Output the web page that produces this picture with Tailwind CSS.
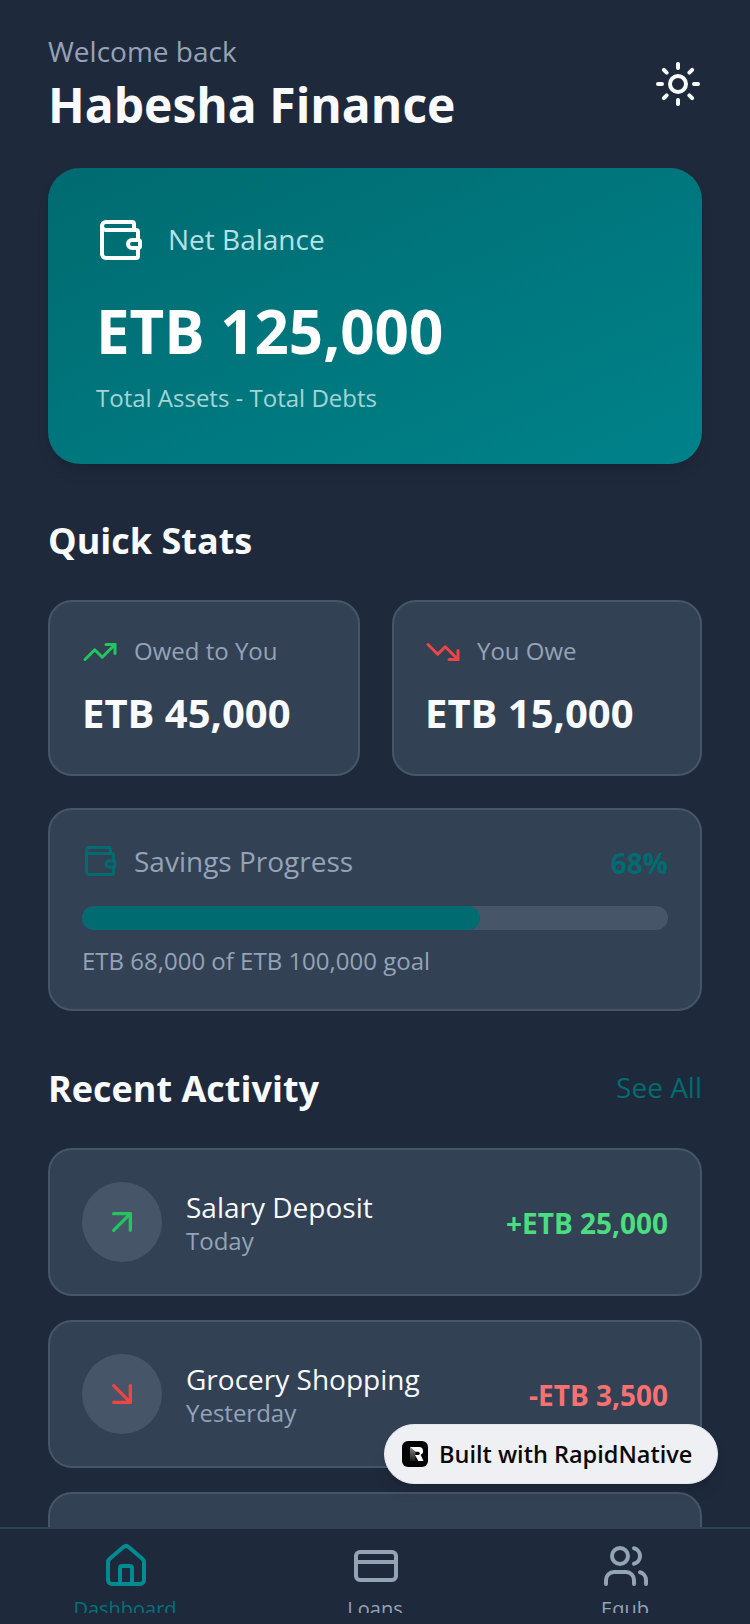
<!DOCTYPE html>
<html lang="en">
<head>
    <meta charset="UTF-8">
    <meta name="viewport" content="width=device-width, initial-scale=1.0">
    <title>Habesha Finance</title>
    <script src="https://cdn.jsdelivr.net/npm/@tailwindcss/browser@4"></script>
</head>
<body class="bg-[#1e293b] font-['Open_Sans',sans-serif]">
<div class="relative h-[1624px] w-[750px] overflow-hidden flex flex-col">
    <!-- Scrolling content -->
    <main class="flex-1 min-h-0 overflow-hidden px-12 pt-8">
        <!-- Header -->
        <header class="flex items-center justify-between mb-[30px]">
            <div>
                <p class="text-[28px] leading-[38px] text-[#94a3b8]">Welcome back</p>
                <h1 class="mt-[2px] text-[48px] leading-[66px] font-bold text-[#f8fafc]">Habesha Finance</h1>
            </div>
            <svg class="w-12 h-12 -mt-[2px] text-[#f8fafc]" viewBox="0 0 24 24" fill="none" stroke="currentColor" stroke-width="2" stroke-linecap="round" stroke-linejoin="round">
                <circle cx="12" cy="12" r="4"/><path d="M12 2v2"/><path d="M12 20v2"/><path d="m4.93 4.93 1.41 1.41"/><path d="m17.66 17.66 1.41 1.41"/><path d="M2 12h2"/><path d="M20 12h2"/><path d="m6.34 17.66-1.41 1.41"/><path d="m19.07 4.93-1.41 1.41"/>
            </svg>
        </header>

        <!-- Net balance -->
        <section class="h-[296px] rounded-[32px] p-12 bg-gradient-to-br from-[#006b70] to-[#00828a] shadow-lg">
            <div class="flex items-center gap-6 h-12">
                <svg class="w-12 h-12 text-white" viewBox="0 0 24 24" fill="none" stroke="currentColor" stroke-width="2" stroke-linecap="round" stroke-linejoin="round">
                    <path d="M19 7V4a1 1 0 0 0-1-1H5a2 2 0 0 0 0 4h15a1 1 0 0 1 1 1v4h-3a2 2 0 0 0 0 4h3a1 1 0 0 0 1-1v-2a1 1 0 0 0-1-1"/><path d="M3 5v14a2 2 0 0 0 2 2h15a1 1 0 0 0 1-1v-4"/>
                </svg>
                <span class="pb-[2px] text-[28px] leading-9 text-[#b5e2e4]">Net Balance</span>
            </div>
            <p class="mt-[31px] text-[60px] leading-[72px] font-bold text-white">ETB 125,000</p>
            <p class="mt-[15px] text-[24px] leading-8 text-[#a3d5d7]">Total Assets - Total Debts</p>
        </section>

        <!-- Quick stats -->
        <h2 class="mt-[49px] mb-[31px] text-[36px] leading-[56px] font-bold text-[#f8fafc]">Quick Stats</h2>
        <div class="grid grid-cols-[312px_310px] gap-8">
            <div class="h-[176px] rounded-[24px] border-2 border-[#475569] bg-[#334155] p-8">
                <div class="flex items-center gap-4 h-9">
                    <svg class="w-9 h-9 shrink-0 text-[#22c55e]" viewBox="0 0 24 24" fill="none" stroke="currentColor" stroke-width="2" stroke-linecap="round" stroke-linejoin="round"><polyline points="22 7 13.5 15.5 8.5 10.5 2 17"/><polyline points="16 7 22 7 22 13"/></svg>
                    <span class="pb-[3px] text-[24px] leading-8 text-[#94a3b8]">Owed to You</span>
                </div>
                <p class="mt-[15px] text-[40px] leading-[56px] font-bold text-[#f8fafc]">ETB 45,000</p>
            </div>
            <div class="h-[176px] rounded-[24px] border-2 border-[#475569] bg-[#334155] py-8 pl-[31px] pr-8">
                <div class="flex items-center gap-4 h-9">
                    <svg class="w-9 h-9 shrink-0 text-[#ef4444]" viewBox="0 0 24 24" fill="none" stroke="currentColor" stroke-width="2" stroke-linecap="round" stroke-linejoin="round"><polyline points="22 17 13.5 8.5 8.5 13.5 2 7"/><polyline points="16 17 22 17 22 11"/></svg>
                    <span class="pb-[3px] text-[24px] leading-8 text-[#94a3b8]">You Owe</span>
                </div>
                <p class="mt-[15px] text-[40px] leading-[56px] font-bold text-[#f8fafc]">ETB 15,000</p>
            </div>
        </div>

        <!-- Savings -->
        <div class="mt-8 rounded-[24px] border-2 border-[#475569] bg-[#334155] p-8">
            <div class="flex items-center justify-between h-10 -mt-px">
                <div class="flex items-center gap-4">
                    <svg class="w-9 h-9 text-[#006b70]" viewBox="0 0 24 24" fill="none" stroke="currentColor" stroke-width="2" stroke-linecap="round" stroke-linejoin="round">
                        <path d="M19 7V4a1 1 0 0 0-1-1H5a2 2 0 0 0 0 4h15a1 1 0 0 1 1 1v4h-3a2 2 0 0 0 0 4h3a1 1 0 0 0 1-1v-2a1 1 0 0 0-1-1"/><path d="M3 5v14a2 2 0 0 0 2 2h15a1 1 0 0 0 1-1v-4"/>
                    </svg>
                    <span class="text-[28px] leading-9 text-[#94a3b8]">Savings Progress</span>
                </div>
                <span class="pt-[4px] text-[28px] leading-9 font-bold text-[#006b70]">68%</span>
            </div>
            <div class="mt-[25px] h-6 rounded-full bg-[#475569] overflow-hidden">
                <div class="h-full rounded-full bg-[#006b70]" style="width: 68%"></div>
            </div>
            <p class="mt-[15px] text-[24px] leading-8 text-[#94a3b8]">ETB 68,000 of ETB 100,000 goal</p>
        </div>

        <!-- Recent activity -->
        <div class="mt-[49px] mb-8 flex items-center justify-between h-14">
            <h2 class="pt-[2px] text-[36px] leading-[56px] font-bold text-[#f8fafc]">Recent Activity</h2>
            <span class="pb-[2px] text-[28px] leading-9 text-[#006b70]">See All</span>
        </div>
        <div class="flex flex-col gap-6">
            <div class="h-[148px] rounded-[24px] border-2 border-[#475569] bg-[#334155] px-8 flex items-center">
                <div class="w-20 h-20 rounded-full bg-[#475569] flex items-center justify-center shrink-0">
                    <svg class="w-10 h-10 text-[#22c55e]" viewBox="0 0 24 24" fill="none" stroke="currentColor" stroke-width="2" stroke-linecap="round" stroke-linejoin="round"><path d="M7 7h10v10"/><path d="M7 17 17 7"/></svg>
                </div>
                <div class="ml-6 flex-1 pt-[2px]">
                    <p class="text-[28px] leading-9 text-[#f8fafc]">Salary Deposit</p>
                    <p class="text-[24px] leading-8 text-[#94a3b8]">Today</p>
                </div>
                <span class="pt-[2px] text-[28px] leading-9 font-bold text-[#4ade80]">+ETB 25,000</span>
            </div>
            <div class="h-[148px] rounded-[24px] border-2 border-[#475569] bg-[#334155] px-8 flex items-center">
                <div class="w-20 h-20 rounded-full bg-[#475569] flex items-center justify-center shrink-0">
                    <svg class="w-10 h-10 text-[#ef4444]" viewBox="0 0 24 24" fill="none" stroke="currentColor" stroke-width="2" stroke-linecap="round" stroke-linejoin="round"><path d="m7 7 10 10"/><path d="M17 7v10H7"/></svg>
                </div>
                <div class="ml-6 flex-1 pt-[2px]">
                    <p class="text-[28px] leading-9 text-[#f8fafc]">Grocery Shopping</p>
                    <p class="text-[24px] leading-8 text-[#94a3b8]">Yesterday</p>
                </div>
                <span class="pt-[2px] text-[28px] leading-9 font-bold text-[#f87171]">-ETB 3,500</span>
            </div>
            <div class="h-[148px] shrink-0 rounded-[24px] border-2 border-[#475569] bg-[#334155]"></div>
        </div>
    </main>

    <!-- Bottom nav -->
    <nav class="relative shrink-0 h-[97px] border-t-2 border-[#334155] bg-[#1e293b] grid grid-cols-3 pb-[11px]">
        <div class="flex flex-col items-center overflow-hidden pt-[13px]">
            <svg class="w-12 h-12 ml-[2px] shrink-0 text-[#008a92]" viewBox="0 0 24 24" fill="none" stroke="currentColor" stroke-width="2" stroke-linecap="round" stroke-linejoin="round"><path d="M15 21v-8a1 1 0 0 0-1-1h-4a1 1 0 0 0-1 1v8"/><path d="M3 10a2 2 0 0 1 .709-1.528l7-6a2 2 0 0 1 2.582 0l7 6A2 2 0 0 1 21 10v9a2 2 0 0 1-2 2H5a2 2 0 0 1-2-2z"/></svg>
            <span class="mt-[5px] text-[20px] leading-7 text-[#00737a]">Dashboard</span>
        </div>
        <div class="flex flex-col items-center overflow-hidden pt-[13px]">
            <svg class="w-12 h-12 ml-[2px] shrink-0 text-[#94a3b8]" viewBox="0 0 24 24" fill="none" stroke="currentColor" stroke-width="2" stroke-linecap="round" stroke-linejoin="round"><rect width="20" height="14" x="2" y="5" rx="2"/><line x1="2" x2="22" y1="10" y2="10"/></svg>
            <span class="mt-[5px] text-[20px] leading-7 text-[#94a3b8]">Loans</span>
        </div>
        <div class="flex flex-col items-center overflow-hidden pt-[13px]">
            <svg class="w-12 h-12 ml-[2px] shrink-0 text-[#94a3b8]" viewBox="0 0 24 24" fill="none" stroke="currentColor" stroke-width="2" stroke-linecap="round" stroke-linejoin="round"><path d="M16 21v-2a4 4 0 0 0-4-4H6a4 4 0 0 0-4 4v2"/><circle cx="9" cy="7" r="4"/><path d="M22 21v-2a4 4 0 0 0-3-3.87"/><path d="M16 3.13a4 4 0 0 1 0 7.75"/></svg>
            <span class="mt-[5px] text-[20px] leading-7 text-[#94a3b8]">Equb</span>
        </div>
    </nav>

    <!-- Built with badge -->
    <div class="absolute left-[384px] top-[1424px] w-[334px] h-[60px] rounded-full bg-[#eff0f4] border border-[#e2e8f0] shadow-lg flex items-center pl-[17px] gap-[11px]">
        <svg class="w-[26px] h-[26px] shrink-0" viewBox="0 0 26 26">
            <defs><linearGradient id="logo-fade" x1="0" x2="0" y1="0" y2="1"><stop offset="0" stop-color="#8a8a8a"/><stop offset="1" stop-color="#1c1c1c"/></linearGradient></defs>
            <rect width="26" height="26" rx="6" fill="#050505"/>
            <path d="M8 6l5.500 4.800V20H8z" fill="url(#logo-fade)"/>
            <path d="M8 6h9a4 4 0 0 1 1.600 7.700L21.500 20h-5.200l-3.300-6h3.200a1.600 1.600 0 0 0 0-3.200h-2.700z" fill="#fff"/>
        </svg>
        <span class="text-[23.5px] leading-8 font-semibold text-[#0a0a0a] whitespace-nowrap">Built with RapidNative</span>
    </div>
</div>
</body>
</html>
